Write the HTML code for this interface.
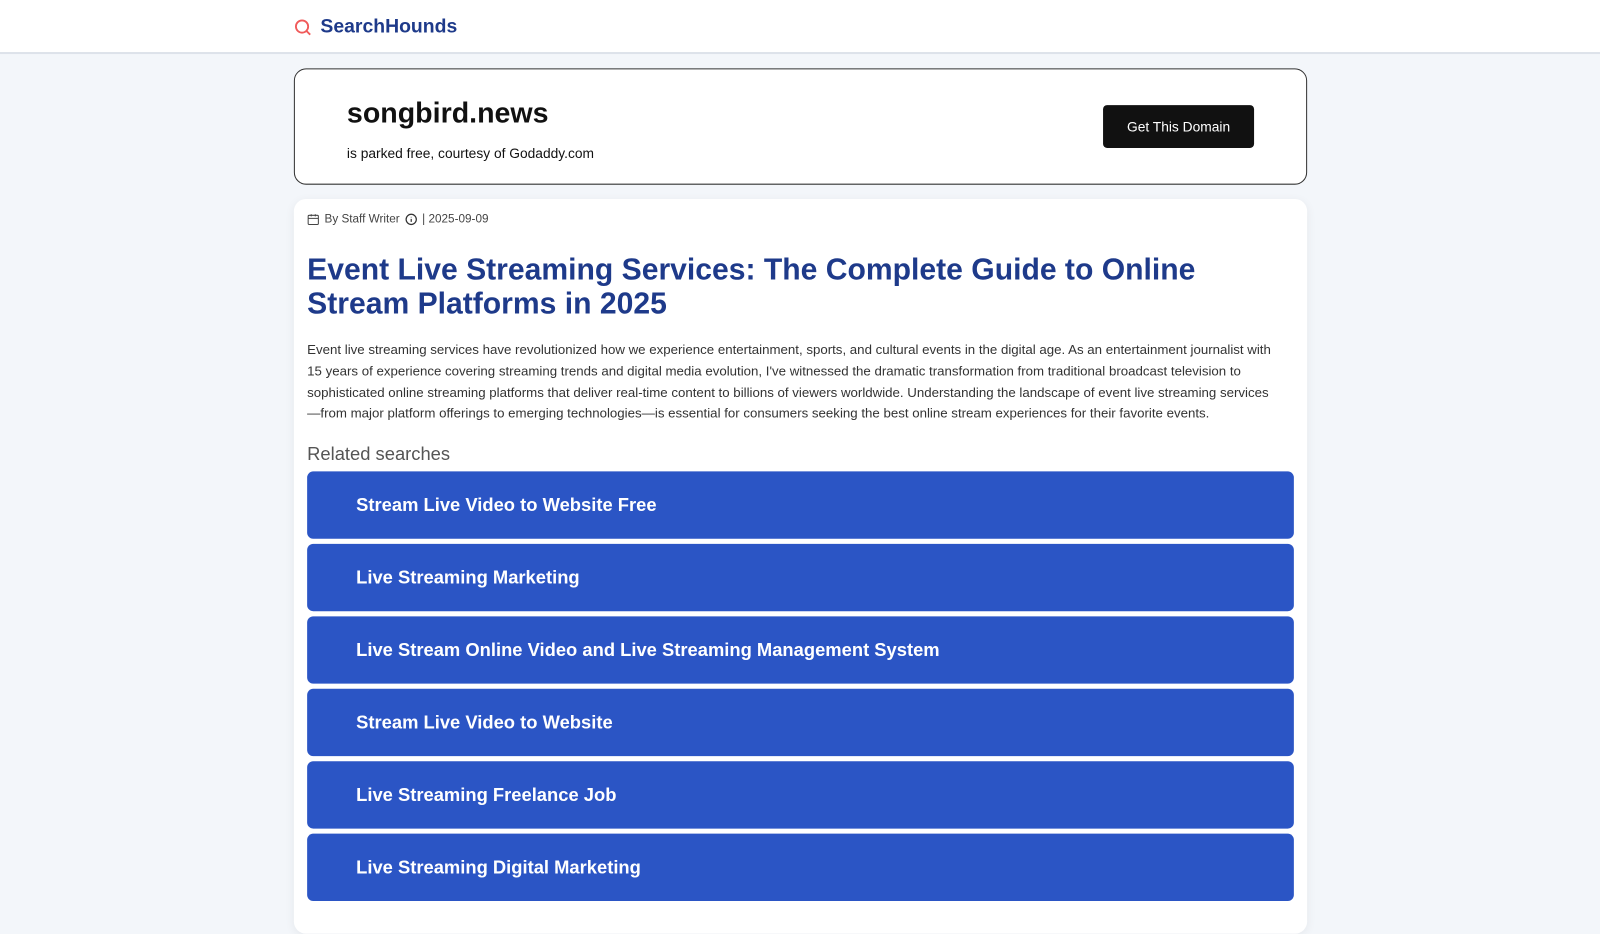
<!DOCTYPE html>
<html><head><meta charset="utf-8"><style>
*{margin:0;padding:0;box-sizing:border-box}
body{width:1600px;height:900px;overflow:hidden;background:#f3f6fa;font-family:"Liberation Sans",Arial,sans-serif;position:relative}
.wrap{position:absolute;left:0;top:0;width:1568px;height:882px;transform:scale(1.0204);transform-origin:0 0}
.hdr{position:absolute;left:0;top:0;width:1568px;height:53px;background:#fff;border-bottom:2px solid #dde2ea}
.logo{position:absolute;left:288px;top:16px;display:flex;align-items:center;gap:8px;color:#1e3a8a;font-weight:bold;font-size:19px}
.dom{position:absolute;left:288px;top:67px;width:993px;height:114px;background:#fff;border:1px solid #333;border-radius:12px}
.dom h1{position:absolute;left:51px;top:27px;font-size:28px;color:#111}
.dom p{position:absolute;left:51px;top:75px;font-size:13.5px;color:#111}
.btn{position:absolute;left:792px;top:35px;width:148px;height:42px;background:#111;color:#fff;border-radius:4px;font-size:13.5px;display:flex;align-items:center;justify-content:center}
.card{position:absolute;left:288px;top:195px;width:993px;height:720px;background:#fff;border-radius:12px;box-shadow:0 2px 10px rgba(0,0,0,.06)}
.meta{position:absolute;left:13px;top:14px;font-size:11.5px;color:#444;display:flex;align-items:center;gap:5px}
.card h2{position:absolute;left:13px;top:53px;width:960px;font-size:29.5px;line-height:33px;color:#1e3a8a}
.para{position:absolute;left:13px;top:138px;width:955px;font-size:13px;line-height:20.8px;color:#333}
.rel{position:absolute;left:13px;top:240px;font-size:18px;color:#555}
.list{position:absolute;left:13px;top:267px;width:967px}
.item{height:66px;margin-bottom:5px;background:#2b55c5;border-radius:6px;color:#fff;font-weight:bold;font-size:18px;padding-left:48px;display:flex;align-items:center}
</style></head><body>
<div class="wrap">
<div class="hdr"><div class="logo"><svg width="18" height="18" viewBox="0 0 18 18" fill="none" stroke="#f05a5a" stroke-width="1.8"><circle cx="8" cy="8" r="6"/><path d="M12.5 12.5L16 16"/></svg>SearchHounds</div></div>
<div class="dom"><h1>songbird.news</h1><p>is parked free, courtesy of Godaddy.com</p><div class="btn">Get This Domain</div></div>
<div class="card">
<div class="meta"><svg width="12" height="12" viewBox="0 0 12 12" fill="none" stroke="#444" stroke-width="1"><rect x="1" y="2" width="10" height="9" rx="1"/><path d="M1 5h10M4 1v2M8 1v2"/></svg>By Staff Writer <svg width="12" height="12" viewBox="0 0 12 12" fill="none" stroke="#333" stroke-width="1.2"><circle cx="6" cy="6" r="5"/><path d="M6 5.5v3M6 3.5v.5"/></svg>| 2025-09-09</div>
<h2>Event Live Streaming Services: The Complete Guide to Online Stream Platforms in 2025</h2>
<p class="para">Event live streaming services have revolutionized how we experience entertainment, sports, and cultural events in the digital age. As an entertainment journalist with 15 years of experience covering streaming trends and digital media evolution, I've witnessed the dramatic transformation from traditional broadcast television to sophisticated online streaming platforms that deliver real-time content to billions of viewers worldwide. Understanding the landscape of event live streaming services—from major platform offerings to emerging technologies—is essential for consumers seeking the best online stream experiences for their favorite events.</p>
<div class="rel">Related searches</div>
<div class="list">
<div class="item">Stream Live Video to Website Free</div>
<div class="item">Live Streaming Marketing</div>
<div class="item">Live Stream Online Video and Live Streaming Management System</div>
<div class="item">Stream Live Video to Website</div>
<div class="item">Live Streaming Freelance Job</div>
<div class="item">Live Streaming Digital Marketing</div>
</div>
</div>
</div>
</body></html>
